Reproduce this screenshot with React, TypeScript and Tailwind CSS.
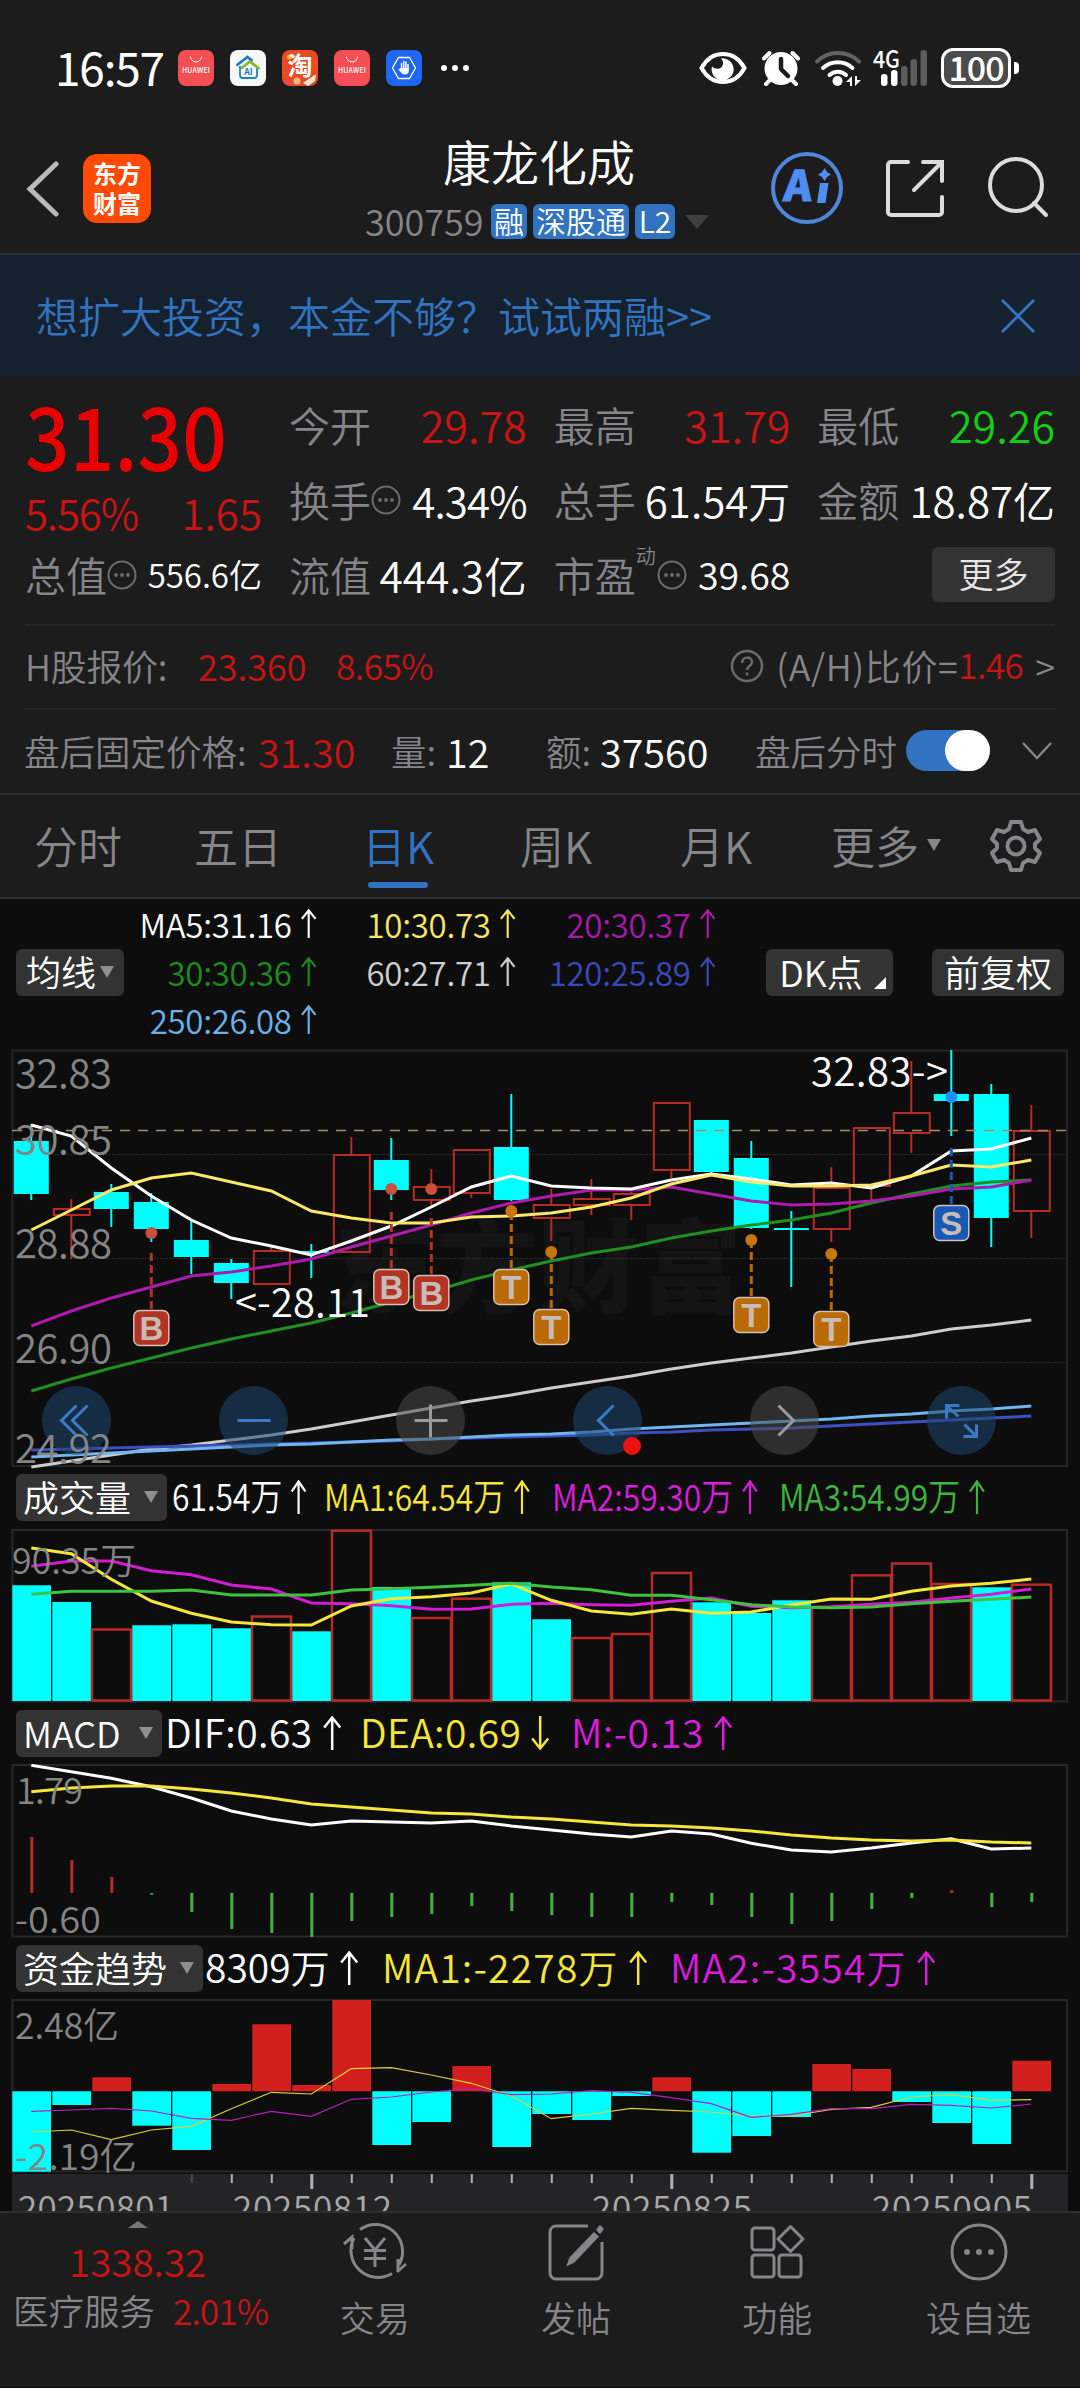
import type { ReactNode } from "react";

const STEP = 40;
const FIRST = 31.3;
const COUNT = 26;

const CYAN = "#00ffff";
const RED = "#b82a26";

type Side = "up" | "down";

// [最高, 实体上沿, 实体下沿, 最低, 涨跌]
const candles: [number, number, number, number, Side][] = [
  [83, 100, 153, 159, "down"],
  [158, 168, 174, 218, "up"],
  [143, 151, 168, 186, "down"],
  [152, 161, 188, 201, "down"],
  [179, 199, 216, 233, "down"],
  [218, 222, 242, 258, "down"],
  [206, 210, 243, 243, "up"],
  [203, 210, 212, 237, "down"],
  [96, 114, 211, 211, "up"],
  [97, 119, 149, 159, "down"],
  [128, 146, 159, 166, "up"],
  [108, 109, 152, 157, "up"],
  [53, 106, 159, 160, "down"],
  [148, 164, 177, 200, "up"],
  [138, 158, 164, 174, "up"],
  [151, 153, 164, 179, "up"],
  [61, 62, 129, 137, "up"],
  [79, 79, 131, 132, "down"],
  [100, 117, 187, 188, "down"],
  [170, 187, 189, 246, "down"],
  [126, 147, 188, 201, "up"],
  [86, 87, 145, 159, "up"],
  [20, 72, 92, 112, "up"],
  [9, 53, 60, 95, "down"],
  [43, 53, 177, 206, "down"],
  [64, 90, 170, 197, "up"],
];

const ma5 = [84, 95, 127, 155, 179, 197, 205, 214, 200, 185, 166, 146, 135, 145, 147, 148, 139, 133, 138, 144, 142, 147, 135, 110, 108, 97];
const ma10 = [189, 169, 149, 137, 132, 141, 150, 170, 177, 182, 182, 176, 175, 172, 166, 157, 143, 134, 141, 145, 145, 144, 135, 124, 126, 119];
const ma20 = [285, 270, 257, 246, 235, 231, 225, 218, 206, 195, 184, 172, 162, 155, 149, 149, 146, 153, 160, 164, 163, 160, 155, 148, 146, 139];
const ma30 = [350, 338, 327, 317, 307, 298, 290, 282, 272, 261, 251, 239, 229, 220, 212, 206, 197, 190, 184, 179, 172, 162, 153, 145, 141, 139];
const ma60 = [426, 420, 414, 408, 404, 399, 394, 388, 381, 374, 367, 360, 354, 347, 341, 335, 328, 322, 317, 312, 306, 300, 295, 288, 284, 279];
const ma120 = [409, 408, 407, 406, 405, 404, 403, 402, 401, 400, 398, 397, 396, 395, 394, 392, 391, 389, 388, 387, 385, 383, 381, 379, 377, 375];
const ma250 = [416, 414, 412, 410, 408, 406, 404, 403, 401, 399, 398, 396, 394, 393, 391, 388, 386, 384, 382, 380, 378, 375, 373, 370, 368, 365];

const trades: { i: number; kind: "B" | "T" | "S"; box: number; dot: number; from: number }[] = [
  { i: 3, kind: "B", box: 269, dot: 192, from: 212 },
  { i: 9, kind: "B", box: 228, dot: 148, from: 171 },
  { i: 10, kind: "B", box: 234, dot: 148, from: 177 },
  { i: 12, kind: "T", box: 228, dot: 170, from: 171 },
  { i: 13, kind: "T", box: 268, dot: 211, from: 211 },
  { i: 18, kind: "T", box: 256, dot: 199, from: 199 },
  { i: 20, kind: "T", box: 270, dot: 213, from: 213 },
  { i: 23, kind: "S", box: 164, dot: 56, from: 107 },
];

const tradeColor = { B: "#b23424", T: "#b96a04", S: "#1759b5" };
const dotColor = { B: "#c8503c", T: "#c77408", S: "#1f8fff" };

const volumes = [124.3, 141, 168.5, 164.3, 163.3, 167.3, 155.5, 170.3, 69.7, 126, 157, 137.7, 121.3, 158.3, 177, 173, 112, 141.3, 152, 139.3, 146.3, 114.3, 102.5, 123, 126.3, 123.7];
// 红柱为较前一日收涨
const volumeUp = [2, 6, 8, 10, 11, 14, 15, 16, 20, 21, 22, 23, 25];
const volMa1 = [87, 92.7, 118.3, 140, 152.3, 161, 163.7, 164, 145, 137.7, 135.7, 132, 123, 139.3, 150, 153.3, 148, 152.3, 151, 144, 138, 138.3, 130.3, 125, 122.3, 118];
const volMa2 = [105.3, 100, 100, 109.7, 113.7, 124, 128, 142, 142.7, 144.7, 148.3, 148, 143.3, 142.3, 143.7, 144.3, 140.3, 137, 145.3, 146.7, 145.7, 143.3, 141.3, 137, 133.3, 128];
const volMa3 = [133.3, 130.3, 130.3, 130.3, 129, 134, 134, 134, 129, 127.7, 126.3, 124.3, 122.3, 126, 128.7, 134.3, 134.3, 138.7, 143.7, 146, 146.7, 146, 142.7, 140.3, 138.3, 136];

const macdBars = [137, 160, 177, 194.7, 212, 229, 233, 237, 221, 217, 214, 206, 211, 215, 217, 217, 202, 205, 217, 224, 221, 209, 198, 190, 207, 202];
const dif = [65.3, 71.7, 78.3, 86.7, 98, 111, 119, 125, 121, 122, 123, 121, 126, 130, 134, 137, 131, 134, 143.3, 150, 152, 148, 143, 138.7, 149, 148];
const dea = [91.7, 88, 86, 86, 89, 93, 98, 104, 107, 110, 113, 114, 117, 119, 122, 125, 126, 128, 131, 135, 138, 140, 141, 140, 142, 143];

const fundBars = [232.7, 166, 138.3, 186.7, 211, 145, 85.3, 146, 61, 206, 183, 127, 208, 175, 181, 157, 138.3, 213.7, 197, 178, 125, 130, 163, 184, 205, 121.7];
const fundMa1 = [193, 191, 200.7, 191, 187.3, 169.7, 153.3, 155, 129.7, 128.7, 136, 144.3, 157, 179.7, 175, 169.3, 171.3, 173, 177, 177, 170.3, 168.3, 158, 155.7, 161.3, 160.7];
const fundMa2 = [172.3, 171, 169.3, 172, 179.3, 181.3, 172.3, 177.3, 160.3, 158, 153, 149.7, 155.7, 155, 151.7, 153.3, 158.7, 164.7, 178.3, 175.3, 169.7, 169.7, 165.3, 166.3, 169, 165];

const cx = (i: number) => FIRST + STEP * i;

function Line({ data, color, width = 3, dy = 0 }: { data: number[]; color: string; width?: number; dy?: number }) {
  return (
    <polyline
      points={data.map((v, i) => `${cx(i)},${v - dy}`).join(" ")}
      fill="none"
      stroke={color}
      strokeWidth={width}
    />
  );
}

function Arrow({ down = false, h = 34 }: { down?: boolean; h?: number }) {
  return (
    <svg width={h * 0.6} height={h} viewBox="0 0 20 34" fill="none" stroke="currentColor" strokeWidth="2.500" className={`shrink-0 ${down ? "rotate-180" : ""}`}>
      <path d="M10 34V2M2 11.5 10 1.5l8 10" />
    </svg>
  );
}

function Caret({ className = "" }: { className?: string }) {
  return <span className={`inline-block h-0 w-0 border-x-[7px] border-t-[12px] border-x-transparent ${className}`} />;
}

function Dots() {
  return (
    <svg width="30" height="30" viewBox="0 0 30 30" className="shrink-0 text-[#6c6c70]">
      <circle cx="15" cy="15" r="13.5" fill="none" stroke="currentColor" strokeWidth="2" />
      <circle cx="9" cy="15" r="1.9" fill="currentColor" />
      <circle cx="15" cy="15" r="1.9" fill="currentColor" />
      <circle cx="21" cy="15" r="1.9" fill="currentColor" />
    </svg>
  );
}

function StatusBar() {
  return (
    <div className="flex h-[136px] items-center pl-[55px] pr-[61px]">
      <div className="mb-[5px] w-[123px] text-[46px] leading-[60px] tracking-[-1.2px] text-white font-normal">16:57</div>
      <div className="flex gap-4">
        <HuaweiIcon />
        <svg width="36" height="36" viewBox="0 0 36 36">
          <rect width="36" height="36" rx="8" fill="#f6f8f8" />
          <path d="M10 16v9a3 3 0 0 0 3 3h11a3 3 0 0 0 3-3v-9" fill="none" stroke="#1b84c4" strokeWidth="1.800" />
          <path d="M6.500 15.500 17.500 7l5 4" fill="none" stroke="#1b78b8" strokeWidth="2.600" />
          <path d="M11 18.500 20 11.500l9.500 7.500" fill="none" stroke="#7db928" strokeWidth="2.800" />
          <text x="18.500" y="25" textAnchor="middle" fontSize="8.500" fontWeight="700" fill="#1b78b8">AI</text>
        </svg>
        <svg width="36" height="36" viewBox="0 0 36 36">
          <rect width="36" height="36" rx="8" fill="#e84c20" />
          <circle cx="7.500" cy="7" r="2.500" fill="#f8b62d" />
          <path d="M3 30a5 5 0 0 0 9 3z" fill="#f2455a" />
          <circle cx="15" cy="31" r="3.500" fill="#eab98c" />
          <path d="M21 33l13-9-1 7-7 5z" fill="#f4e6dc" />
          <text x="18" y="25" textAnchor="middle" fontSize="25" fontWeight="700" fill="#fff">淘</text>
        </svg>
        <HuaweiIcon />
        <svg width="36" height="36" viewBox="0 0 36 36">
          <rect width="36" height="36" rx="8" fill="#1f66f2" />
          <path d="M12.500 7.500h11L29.500 18l-6 10.500h-11L6.500 18z" fill="none" stroke="#fff" strokeWidth="1.300" />
          <path d="M15.500 19v-5.500M17.700 18v-6.500M19.900 18v-6M22 19v-4.500" fill="none" stroke="#fff" strokeWidth="1.500" strokeLinecap="round" />
          <path d="M14.800 18h8v3c0 2.500-2 3.500-4 3.500s-4-2-6.500-5z" fill="#fff" />
        </svg>
      </div>
      <div className="ml-[19px] flex gap-[5px]">
        <span className="h-[6px] w-[6px] rounded-full bg-white" />
        <span className="h-[6px] w-[6px] rounded-full bg-white" />
        <span className="h-[6px] w-[6px] rounded-full bg-white" />
      </div>
      <div className="ml-auto flex items-center text-white">
        <svg width="48" height="34" viewBox="0 0 48 34">
          <path d="M2.500 17C8 7 15 3 24 3S40 7 45.500 17C40 27 33 31 24 31S8 27 2.500 17z" fill="none" stroke="#fff" strokeWidth="4" />
          <path d="M22 7.500a11 11 0 1 1-9 8c3 3 8 3 10 0s1-6-1-8z" fill="#fff" />
        </svg>
        <svg width="40" height="38" viewBox="0 0 40 38" className="ml-[14px]">
          <circle cx="20" cy="19.500" r="16.500" fill="#fff" />
          <path d="M3 9.500 8.500 4M37 9.500 31.500 4M8 32l-3 3M32 32l3 3" fill="none" stroke="#fff" strokeWidth="4" strokeLinecap="round" />
          <path d="M20 10v10l7 7" fill="none" stroke="#1c1c1c" strokeWidth="4.500" strokeLinecap="round" strokeLinejoin="round" />
        </svg>
        <svg width="48" height="38" viewBox="0 0 48 38" className="ml-[13px]" fill="none" strokeWidth="4" strokeLinecap="round">
          <path d="M3 12.500a30 30 0 0 1 42 0" stroke="#636363" />
          <path d="M9 19a22 22 0 0 1 29.500 0M15.500 26a12 12 0 0 1 16.500 0" stroke="#fff" />
          <circle cx="23.500" cy="32" r="5" fill="#fff" />
          <path d="M38 37V27l-6 6h4v4zM41 27v10l6-6h-4v-4z" fill="#fff" />
        </svg>
        <svg width="56" height="40" viewBox="0 0 56 40" className="ml-[11px]">
          <text x="0" y="20" fontSize="24" fontWeight="500" fill="#fff" textLength="27" lengthAdjust="spacingAndGlyphs">4G</text>
          <rect x="8" y="26" width="6.500" height="12" rx="3" fill="#fff" />
          <rect x="18" y="22" width="6.500" height="16" rx="3" fill="#fff" />
          <rect x="28" y="18" width="6.500" height="20" rx="3" fill="#5c5c5c" />
          <rect x="37.500" y="11" width="6.500" height="27" rx="3" fill="#5c5c5c" />
          <rect x="47.500" y="2" width="6.500" height="36" rx="3" fill="#5c5c5c" />
        </svg>
        <div className="ml-[12px] flex h-10 w-[70px] items-center justify-center rounded-[12px] border-[3px] border-white bg-[#4b4b4b] pb-[2px] text-[34px] font-medium leading-none tracking-[-1px]">100</div>
        <span className="ml-[3px] h-3 w-[5px] rounded-r bg-white" />
      </div>
    </div>
  );
}

function HuaweiIcon() {
  return (
    <svg width="36" height="36" viewBox="0 0 36 36">
      <rect width="36" height="36" rx="8" fill="#f54e55" />
      <path d="M12.500 6.500a5.500 5.500 0 0 0 11 0" fill="none" stroke="#fff" strokeWidth="1" />
      <text x="4" y="23" fontSize="7" fontWeight="500" fill="#fff" textLength="28">HUAWEI</text>
    </svg>
  );
}

function Header() {
  return (
    <div className="flex h-[119px] border-b-2 border-[#2b3032] pl-[26px] pr-[29px]">
      <svg width="34" height="56" viewBox="0 0 34 56" className="mt-[25px] shrink-0" fill="none" stroke="#b9b9b9" strokeWidth="5" strokeLinecap="round">
        <path d="M30 3 4 28l26 25" />
      </svg>
      <div className="ml-[23px] mt-[18px] flex h-[69px] w-[68px] shrink-0 flex-col items-center justify-center rounded-[14px] bg-[#ff4b05] pb-[2px] text-[24px] font-bold leading-[30px] text-white">
        <span>东方</span>
        <span>财富</span>
      </div>
      <div className="ml-[208px] flex w-[352px] flex-col items-center">
        <div className="-mt-[2px] ml-[8px] text-[48px] leading-[52px] text-white">康龙化成</div>
        <div className="mt-[18px] flex w-full items-center gap-[6px] pl-[6px]">
          <span className="-mt-[4px] w-[120px] text-[36px] leading-9 text-[#85858a]">300759</span>
          <Badge className="w-9">融</Badge>
          <Badge className="w-24">深股通</Badge>
          <Badge className="w-10">L2</Badge>
          <span className="ml-1 inline-block h-0 w-0 border-x-[12px] border-t-[14px] border-x-transparent border-t-[#3f3f41]" />
        </div>
      </div>
      <svg width="74" height="74" viewBox="0 0 74 74" className="ml-[59px] mt-[15px] shrink-0">
        <circle cx="37" cy="37" r="34" fill="none" stroke="#4f86da" strokeWidth="4" />
        <text x="0" y="50" fontSize="42" fontWeight="900" fill="#4f8df0" stroke="#4f8df0" strokeWidth="1" textLength="28" lengthAdjust="spacingAndGlyphs" transform="translate(17 0) skewX(-5)">A</text>
        <path d="M50 32h8.500l-3 20h-8.500zM54.500 17l2.500 4 4 2.500-4 2.500-2.500 4-2.500-4-4-2.500 4-2.500z" fill="#4f8df0" />
      </svg>
      <svg width="60" height="60" viewBox="0 0 60 60" className="ml-[41px] mt-[23px] shrink-0" fill="none" stroke="#dcdcdc" strokeWidth="4" strokeLinecap="round">
        <path d="M23 3H6a3 3 0 0 0-3 3v47a3 3 0 0 0 3 3h48a3 3 0 0 0 3-3V38" />
        <path d="M38 3h19v19M56 4 29 31" />
      </svg>
      <svg width="62" height="62" viewBox="0 0 62 62" className="ml-[42px] mt-[21px] shrink-0" fill="none" stroke="#dcdcdc" strokeWidth="4">
        <circle cx="29" cy="28" r="26" />
        <path d="M47 46 59 58" strokeLinecap="round" />
      </svg>
    </div>
  );
}

function Badge({ children, className }: { children: ReactNode; className: string }) {
  return (
    <span className={`flex h-[35px] shrink-0 items-center justify-center rounded-md bg-[#3173c0] pb-[3px] text-[30px] leading-none text-white ${className}`}>
      {children}
    </span>
  );
}

function Banner() {
  return (
    <div className="flex h-[121px] items-center justify-between bg-[#15212f] pb-[3px] pl-[36px] pr-[45px] text-[42px] text-[#3273bd]">
      <span>想扩大投资，本金不够？试试两融&gt;&gt;</span>
      <svg width="34" height="34" viewBox="0 0 34 34" stroke="currentColor" strokeWidth="3" className="mt-[3px]">
        <path d="M1 1l32 32M33 1 1 33" />
      </svg>
    </div>
  );
}

function Stat({ label, value, tone = "text-white", dots = false, sup, size = "text-[43px]" }: {
  label: string;
  value: string;
  tone?: string;
  dots?: boolean;
  sup?: string;
  size?: string;
}) {
  return (
    <div className="flex h-[75px] items-center whitespace-nowrap">
      <span className="text-[41px] text-[#85858a]">{label}</span>
      {sup && <span className="mb-[38px] mr-[1px] text-[20px] leading-none text-[#85858a]">{sup}</span>}
      {dots && <Dots />}
      <span className={`ml-auto ${size} ${tone}`}>{value}</span>
    </div>
  );
}

function Quote() {
  return (
    <div className="mx-[25px] flex h-[250px] gap-[27px] border-b-2 border-[#262628] pt-[11px]">
      <div className="w-[237px] shrink-0">
        <div className="h-[101px] origin-left scale-x-[0.9] pt-[2px] text-[87px] font-medium leading-[88px] text-[#e80000]">31.30</div>
        <div className="flex h-[49px] items-center justify-between pb-[2px] text-[42px] text-[#c81414]">
          <span className="tracking-[-1.2px]">5.56%</span>
          <span>1.65</span>
        </div>
        <Stat label="总值" value="556.6亿" dots size="text-[33px]" />
      </div>
      <div className="w-[238px]">
        <Stat label="今开" value="29.78" tone="text-[#c81414]" />
        <Stat label="换手" value="4.34%" dots size="text-[42px] tracking-[-0.9px]" />
        <Stat label="流值" value="444.3亿" size="text-[42.5px]" />
      </div>
      <div className="w-[237px]">
        <Stat label="最高" value="31.79" tone="text-[#c81414]" />
        <Stat label="总手" value="61.54万" size="text-[42px]" />
        <Stat label="市盈" value="39.68" dots sup="动" size="text-[37.5px]" />
      </div>
      <div className="w-[238px]">
        <Stat label="最低" value="29.26" tone="text-[#14cc14]" />
        <Stat label="金额" value="18.87亿" size="text-[42px]" />
        <div className="flex h-[75px] items-center justify-end">
          <button className="h-[55px] w-[123px] rounded-md bg-[#333] pb-[4px] text-[35px] leading-none text-[#e6e6e6]">更多</button>
        </div>
      </div>
    </div>
  );
}

function HShareRow() {
  return (
    <div className="mx-[25px] flex h-[84px] items-center whitespace-nowrap border-b-2 border-[#262628] pb-[5px] text-[36px] text-[#85858a]">
      <span className="w-[173px] tracking-[-0.3px]">H股报价:</span>
      <span className="w-[138px] text-[36px] text-[#c81414]">23.360</span>
      <span className="text-[35.5px] tracking-[-0.7px] text-[#c81414]">8.65%</span>
      <svg width="34" height="34" viewBox="0 0 34 34" className="ml-auto mt-[3px]" fill="none" stroke="#6c6c70" strokeWidth="2.500">
        <circle cx="17" cy="17" r="15" />
        <path d="M12 14c0-7 10-7 10-1 0 4-5 4-5 8M17 23.500v3" />
      </svg>
      <span className="ml-[12px] w-[182px] tracking-[0.6px]">(A/H)比价=</span>
      <span className="w-[67px] text-[35px] tracking-[-0.5px] text-[#c81414]">1.46</span>
      <span className="ml-[10px]">&gt;</span>
    </div>
  );
}

function AfterHoursRow() {
  return (
    <div className="flex h-[85px] items-center whitespace-nowrap border-b-2 border-[#2e2e30] pb-[2px] pl-[24px] text-[35.500px] text-[#85858a]">
      <span className="w-[234px]">盘后固定价格:</span>
      <span className="w-[133px] text-[39.500px] text-[#c81414]">31.30</span>
      <span className="w-[55px]">量:</span>
      <span className="w-[100px] text-[39.500px] text-white">12</span>
      <span className="w-[54px]">额:</span>
      <span className="w-[155px] text-[39.500px] text-white">37560</span>
      <span className="w-[151px]">盘后分时</span>
      <span className="flex h-[41px] w-[84px] justify-end rounded-full bg-[#3173c0]">
        <span className="h-[41px] w-[45px] rounded-full bg-white" />
      </span>
      <svg width="30" height="18" viewBox="0 0 30 18" className="ml-[32px]" fill="none" stroke="#85858a" strokeWidth="2.500">
        <path d="M1 1l14 15L29 1" />
      </svg>
    </div>
  );
}

function Tabs() {
  return (
    <div className="flex h-[104px] items-center whitespace-nowrap border-b-2 border-[#2e2e30] pb-[2px] pl-[34px] text-[44px] text-[#85858a]">
      <span className="w-[160px]">分时</span>
      <span className="w-[168px]">五日</span>
      <span className="relative w-[158px] text-[#3173c0]">
        日K
        <span className="absolute -bottom-[10px] left-[6px] h-[6px] w-[60px] rounded-full bg-[#3173c0]" />
      </span>
      <span className="w-[160px]">周K</span>
      <span className="w-[151px]">月K</span>
      <span>更多</span>
      <Caret className="ml-[8px] border-t-[#85858a]" />
      <svg width="54" height="54" viewBox="0 0 54 54" className="ml-[48px] mt-[2px]" fill="none" stroke="#85858a" strokeWidth="4" strokeLinejoin="round">
        <path d="M22 3h10l2 7 5 3 7-2 5 9-5 5v4l5 5-5 9-7-2-5 3-2 7H22l-2-7-5-3-7 2-5-9 5-5v-4l-5-5 5-9 7 2 5-3z" />
        <circle cx="27" cy="27" r="8.500" />
      </svg>
    </div>
  );
}

function Ma({ children, color }: { children: string; color: string }) {
  return (
    <span className={`flex items-center justify-end gap-[8px] ${color}`}>
      <span>{children}</span>
      <Arrow h={29} />
    </span>
  );
}

function MaLegend() {
  return (
    <div className="flex h-[142px] items-center pl-[16px] pt-[4px]">
      <button className="flex h-[47px] w-[108px] items-center justify-center gap-[4px] rounded-md bg-[#333] text-[35px] leading-none text-white">
        <span className="mb-[3px]">均线</span>
        <Caret className="border-t-[#8e8e93]" />
      </button>
      <div className="-mt-[1px] grid h-[144px] w-[593px] grid-cols-[193px_199px_200px] grid-rows-3 whitespace-nowrap text-[33px] leading-[48px] tracking-[-0.3px]">
        <Ma color="text-white">MA5:31.16</Ma>
        <Ma color="text-[#f5e663]">10:30.73</Ma>
        <Ma color="text-[#a81aa8]">20:30.37</Ma>
        <Ma color="text-[#1c8c1c]">30:30.36</Ma>
        <Ma color="text-[#cfcfcf]">60:27.71</Ma>
        <Ma color="text-[#3a49b8]">120:25.89</Ma>
        <Ma color="text-[#69b2ea]">250:26.08</Ma>
      </div>
      <button className="relative ml-[49px] h-[47px] w-[127px] rounded-md bg-[#333] pb-[3px] pr-[17px] text-[36px] leading-none text-white">
        DK点
        <span className="absolute bottom-[7px] right-[7px] h-0 w-0 border-b-[12px] border-l-[12px] border-b-white border-l-transparent" />
      </button>
      <button className="ml-[39px] h-[47px] w-[132px] rounded-md bg-[#333] pb-[3px] text-[36px] leading-none text-white">前复权</button>
    </div>
  );
}

function Control({ x, muted = false, children }: { x: number; muted?: boolean; children: ReactNode }) {
  return (
    <g transform={`translate(${x} 379.500)`} fill="none" stroke={muted ? "#9a9a9c" : "#3a7ac6"} strokeWidth="3">
      <circle r="34.500" fill={muted ? "#4a4a4c" : "#1f4770"} fillOpacity="0.550" stroke="none" />
      {children}
    </g>
  );
}

function KChart() {
  return (
    <svg width="1080" height="430" viewBox="0 0 1080 430" className="block">
      <text x="334" y="264" fontSize="102" fontWeight="900" fill="#141414">东方财富</text>
      <path d="M12.500 9.500H1067V425H12.500z" fill="none" stroke="#242424" strokeWidth="2" />
      {[113.5, 217.5, 321.5].map((y) => (
        <path key={y} d={`M13 ${y}H1067`} stroke="#333" strokeWidth="1" strokeDasharray="1.500 1.500" />
      ))}
      {candles.map(([hi, top, bot, lo, side], i) =>
        side === "down" ? (
          <g key={i} fill={CYAN}>
            <rect x={cx(i) - 1} y={hi} width="2" height={lo - hi} />
            <rect x={cx(i) - 17.5} y={top} width="35" height={bot - top} />
          </g>
        ) : (
          <g key={i} fill="none" stroke={RED} strokeWidth="2">
            <path d={`M${cx(i)} ${hi}V${top}M${cx(i)} ${bot}V${lo}`} />
            <rect x={cx(i) - 17.5} y={top} width="36" height={bot - top} />
          </g>
        ),
      )}
      <path d="M12 89.500H1067" stroke="#a58e68" strokeWidth="1.500" strokeDasharray="10 8" />
      <Line data={ma60} color="#cccccc" />
      <Line data={ma120} color="#3d4fc0" />
      <Line data={ma250} color="#70b6ee" />
      <Line data={ma30} color="#1f8f1f" />
      <Line data={ma20} color="#ad1bad" />
      <Line data={ma5} color="#ffffff" />
      <Line data={ma10} color="#fbe768" />
      <g fill="#fff" fontSize="40">
        <text x="235" y="276" textLength="135">&lt;-28.11</text>
        <text x="811" y="45" textLength="137">32.83-&gt;</text>
      </g>
      {trades.map((t) => (
        <g key={t.i}>
          <path d={`M${cx(t.i)} ${t.from}V${t.box}`} stroke={tradeColor[t.kind]} strokeWidth="3" strokeDasharray="8 4" />
          <circle cx={cx(t.i)} cy={t.dot} r="6" fill={dotColor[t.kind]} />
          <rect x={cx(t.i) - 17.5} y={t.box + 0.5} width="35" height="35" rx="6" fill={tradeColor[t.kind]} stroke="#d8c0b4" strokeWidth="1.500" />
          <text x={cx(t.i)} y={t.box + 30} textAnchor="middle" fontSize="33" fontWeight="700" fill="#c9bcb6" className="font-['Liberation_Sans']">
            {t.kind}
          </text>
        </g>
      ))}
      <Control x={76.5}>
        <path d="M0-15-15 0 0 15M11-15-4 0l15 15" />
      </Control>
      <Control x={253.5}>
        <path d="M-16 0h33" />
      </Control>
      <Control x={430.5} muted>
        <path d="M-16 0h33M0-16v33" />
      </Control>
      <Control x={607.5}>
        <path d="M6-15-9 0 6 15" />
      </Control>
      <Control x={784.5} muted>
        <path d="M-6-15 9 0-6 15" />
      </Control>
      <Control x={961.5}>
        <path d="M-15-2v-13h13M-14-14-3-4M15 4v12H2M14 15 3 4" />
      </Control>
      <circle cx="632" cy="405" r="9" fill="#ee1111" />
      <g fill="#858585" fontSize="40">
        <text x="15" y="47" textLength="97">32.83</text>
        <text x="15" y="113" textLength="97">30.85</text>
        <text x="15" y="217" textLength="97">28.88</text>
        <text x="15" y="321.500" textLength="97">26.90</text>
        <text x="15" y="422" textLength="97">24.92</text>
      </g>
    </svg>
  );
}

function IndicatorHead({ name, width, size, children }: { name: string; width: string; size: string; children: ReactNode }) {
  return (
    <div className="flex h-[59px] items-center whitespace-nowrap pb-[3px] pl-[16px]">
      <button className={`flex h-[47px] shrink-0 items-center justify-between rounded-md bg-[#333] pl-[7px] pr-[9px] text-[36px] leading-none text-white ${width}`}>
        <span className="mb-[3px]">{name}</span>
        <Caret className="border-t-[#8e8e93]" />
      </button>
      <div className={`flex text-white ${size}`}>{children}</div>
    </div>
  );
}

function Reading({ children, className = "", down }: { children: string; className?: string; down?: boolean }) {
  return (
    <span className={`flex shrink-0 items-center gap-[9px] leading-none ${className}`}>
      <span className="mb-[3px]">{children}</span>
      <Arrow down={down} />
    </span>
  );
}

function VolumeChart() {
  return (
    <svg width="1080" height="174" viewBox="0 0 1080 174" className="block">
      <path d="M12.500 1H1067v171.500H12.500z" fill="none" stroke="#282828" strokeWidth="2" />
      {volumes.map((v, i) => {
        const y = v - 68;
        return volumeUp.includes(i) ? (
          <rect key={i} x={12 + STEP * i} y={y} width="39" height={171.5 - y} fill="none" stroke={RED} strokeWidth="2.500" />
        ) : (
          <rect key={i} x={12.3 + STEP * i} y={y} width="38.700" height={172 - y} fill={CYAN} />
        );
      })}
      <Line data={volMa2} color="#d31bd3" dy={68} />
      <Line data={volMa1} color="#f5e63a" dy={68} />
      <Line data={volMa3} color="#3fc23f" dy={68} />
      <text x="12" y="45" fontSize="36" fill="#858585" textLength="124" lengthAdjust="spacingAndGlyphs">90.35万</text>
    </svg>
  );
}

function MacdChart() {
  return (
    <svg width="1080" height="174" viewBox="0 0 1080 174" className="block">
      <path d="M12.500 1H1067v171.500H12.500z" fill="none" stroke="#282828" strokeWidth="2" />
      {macdBars.map((v, i) => (
        <path key={i} d={`M${cx(i) + 0.5} 129V${v - 64}`} stroke={v < 193 ? RED : "#3fb53f"} strokeWidth="3" />
      ))}
      <Line data={dif} color="#ffffff" dy={64} />
      <Line data={dea} color="#f5e63a" dy={64} />
      <g fill="#858585" fontSize="36">
        <text x="16" y="40" textLength="67">1.79</text>
        <text x="15" y="169" textLength="86" lengthAdjust="spacingAndGlyphs">-0.60</text>
      </g>
    </svg>
  );
}

function FundChart() {
  const zero = 92.3;
  return (
    <svg width="1080" height="174" viewBox="0 0 1080 174" className="block">
      <path d="M12.500 1H1067v171.500H12.500z" fill="none" stroke="#282828" strokeWidth="2" />
      {fundBars.map((v, i) => {
        const y = v - 60;
        return (
          <rect
            key={i}
            x={12.3 + STEP * i}
            y={Math.min(y, zero)}
            width="38.700"
            height={Math.abs(y - zero)}
            fill={y < zero ? "#d41f1f" : CYAN}
          />
        );
      })}
      <Line data={fundMa1} color="#d9cf3c" width={1.2} dy={60} />
      <Line data={fundMa2} color="#b81fb8" width={1.2} dy={60} />
      <g fill="#858585" fontSize="36">
        <text x="15" y="40" textLength="104" lengthAdjust="spacingAndGlyphs">2.48亿</text>
        <text x="15" y="171" textLength="122" lengthAdjust="spacingAndGlyphs">-2.19亿</text>
      </g>
    </svg>
  );
}

function DateAxis() {
  return (
    <svg width="1080" height="38" viewBox="0 0 1080 38" className="block">
      <rect x="12" y="1" width="1056" height="37" fill="#242426" />
      {Array.from({ length: COUNT }, (_, i) => i)
        .filter((i) => i >= 4)
        .map((i) => (
          <path
            key={i}
            d={`M${cx(i) + 0.5} 1v${i % 9 === 7 ? 15 : 9}`}
            stroke={i === 4 ? "#4a4a4c" : "#b0b0b0"}
            strokeWidth={i % 9 === 7 ? 3 : 2}
          />
        ))}
      <g fill="#a8a8a8" fontSize="35">
        <text x="18" y="48" textLength="156">20250801</text>
        <text x="233" y="48" textLength="159">20250812</text>
        <text x="592" y="48" textLength="160">20250825</text>
        <text x="872" y="48" textLength="160">20250905</text>
      </g>
    </svg>
  );
}

function NavItem({ label, children }: { label: string; children: ReactNode }) {
  return (
    <div className="flex w-[201.3px] flex-col items-center pt-[9px]">
      <svg width="64" height="60" viewBox="0 0 64 60" fill="none" stroke="#85858a" strokeWidth="3">
        {children}
      </svg>
      <span className="mt-[17px] text-[35px] leading-[36px]">{label}</span>
    </div>
  );
}

function BottomNav() {
  return (
    <div className="flex h-[176px] border-t-2 border-[#2e2e30] bg-[#1c1c1c] text-[#85858a]">
      <div className="flex w-[274px] flex-col pl-[13px]">
        <span className="ml-[115px] mt-[8px] h-0 w-0 border-x-[10px] border-b-[7px] border-x-transparent border-b-[#77777b]" />
        <span className="ml-[56px] mt-[12px] text-[38.500px] leading-[40px] text-[#c81414]">1338.32</span>
        <span className="mt-[12px] flex items-center gap-[18px] whitespace-nowrap text-[35.500px] leading-[36px]">
          医疗服务
          <span className="text-[35px] tracking-[-0.8px] text-[#c81414]">2.01%</span>
        </span>
      </div>
      <NavItem label="交易">
        <path d="M17 7.500A27 27 0 0 1 56 43M49 51.500A27 27 0 0 1 11 16M1 22l8-7v12M55 49v-12M54 50l9-8M22 16l10 12 10-12M21 28.500h22M21 36.500h22M32 28v17" />
      </NavItem>
      <NavItem label="发帖">
        <path d="M44 4H12a6 6 0 0 0-6 6v41a6 6 0 0 0 6 6h40a6 6 0 0 0 6-6V20" />
        <path d="M50 11 26 36l-2.500 7 6.500-3L54 14.500zM53 8l3-4 3 3-3 4z" fill="#85858a" strokeWidth="1.500" />
      </NavItem>
      <NavItem label="功能">
        <rect x="7" y="6" width="22" height="22" rx="3" />
        <rect x="7" y="33" width="22" height="22" rx="3" />
        <rect x="34" y="33" width="22" height="22" rx="3" />
        <path d="M45.500 4.500 58 17 45.500 29.500 33 17z" strokeLinejoin="round" />
      </NavItem>
      <NavItem label="设自选">
        <circle cx="32" cy="30" r="27" />
        <g fill="#85858a" stroke="none">
          <circle cx="20" cy="30" r="3" />
          <circle cx="32" cy="30" r="3" />
          <circle cx="44" cy="30" r="3" />
        </g>
      </NavItem>
    </div>
  );
}

export default function App() {
  return (
    <div className="flex h-[2388px] w-[1080px] flex-col overflow-hidden bg-[#0d0d0d] font-['Noto_Sans_CJK_SC',sans-serif] font-[350]">
      <div className="bg-[#1c1c1c]">
        <StatusBar />
        <Header />
        <Banner />
        <Quote />
        <HShareRow />
        <AfterHoursRow />
        <Tabs />
      </div>
      <MaLegend />
      <KChart />
      <div className="-mt-[2px] mb-[1px]">
        <IndicatorHead name="成交量" width="w-[151px]" size="text-[37px]">
          <Reading className="ml-[5px] w-[152px] origin-left scale-x-[0.86]">61.54万</Reading>
          <Reading className="w-[228px] origin-left scale-x-[0.86] text-[#f5e63a]">MA1:64.54万</Reading>
          <Reading className="w-[227px] origin-left scale-x-[0.86] text-[#dc1cdc]">MA2:59.30万</Reading>
          <Reading className="origin-left scale-x-[0.86] text-[#3fb53f]">MA3:54.99万</Reading>
        </IndicatorHead>
      </div>
      <VolumeChart />
      <div className="pt-[2px]">
        <IndicatorHead name="MACD" width="w-[146px]" size="text-[39px] tracking-[0.4px]">
          <Reading className="ml-[3px] w-[195px]">DIF:0.63</Reading>
          <Reading down className="w-[211px] text-[#f5e63a]">DEA:0.69</Reading>
          <Reading className="text-[#dc1cdc]">M:-0.13</Reading>
        </IndicatorHead>
      </div>
      <MacdChart />
      <div className="pt-[2px]">
        <IndicatorHead name="资金趋势" width="w-[187px]" size="text-[39px] tracking-[1.2px]">
          <Reading className="ml-[2px] w-[177px] tracking-normal">8309万</Reading>
          <Reading className="w-[288px] text-[#f5e63a]">MA1:-2278万</Reading>
          <Reading className="text-[#dc1cdc]">MA2:-3554万</Reading>
        </IndicatorHead>
      </div>
      <FundChart />
      <DateAxis />
      <BottomNav />
    </div>
  );
}
